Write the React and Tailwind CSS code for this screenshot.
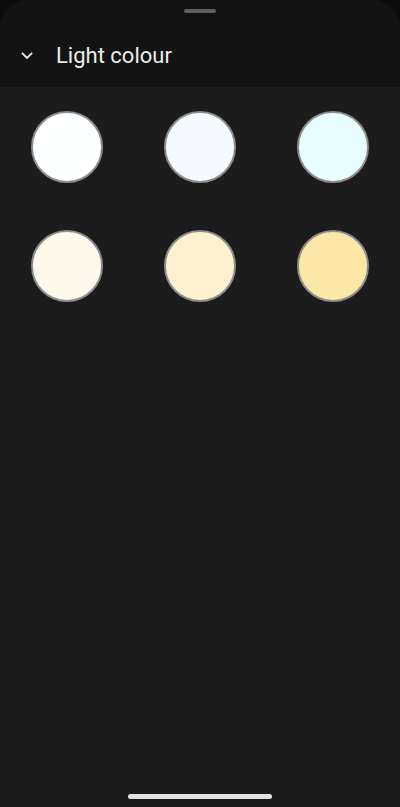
import React from 'react';

// Swatches shown in the colour-temperature picker
const SWATCHES = ['#fdfeff', '#f3fbff', '#e9fdff', '#fef9eb', '#fdf1cf', '#fce8a6'];

const Chevron = () => (
    <svg width="12" height="8" viewBox="0 0 12 8" fill="none">
        <path d="M1.5 1.5 6 6l4.5-4.5" stroke="#e8e8e8" strokeWidth="1.8" strokeLinecap="square" />
    </svg>
);

const App = () => {
    return (
        <div className="h-[807px] w-[400px] bg-[#0c0c0d] overflow-hidden" style={{ fontFamily: 'Roboto, "Noto Sans", sans-serif' }}>
            <div className="flex h-full flex-col overflow-hidden rounded-t-[28px] bg-[#1c1c1d]">
                {/* Sheet header */}
                <div className="flex h-[87px] flex-col bg-[#131314]">
                    <div className="flex justify-center pt-[9px]">
                        <div className="h-[4px] w-[32px] rounded-full bg-[#5d5e60]" />
                    </div>
                    <div className="flex items-center pl-[21px] pt-[32px]">
                        <Chevron />
                        <span className="ml-[23px] text-[22px] leading-none text-[#ececec]">Light colour</span>
                    </div>
                </div>

                {/* Swatch grid */}
                <div className="grid grid-cols-3 gap-y-[47px] pt-[24px]">
                    {SWATCHES.map((c) => (
                        <div key={c} className="flex justify-center">
                            <div
                                className="h-[72px] w-[72px] rounded-full border-2 border-[#8c8c8c]"
                                style={{ backgroundColor: c }}
                            />
                        </div>
                    ))}
                </div>

                <div className="flex-1" />

                {/* Gesture bar */}
                <div className="flex justify-center pb-[8px]">
                    <div className="h-[5px] w-[144px] rounded-full bg-[#e2e2e2]" />
                </div>
            </div>
        </div>
    );
};

export default App;
